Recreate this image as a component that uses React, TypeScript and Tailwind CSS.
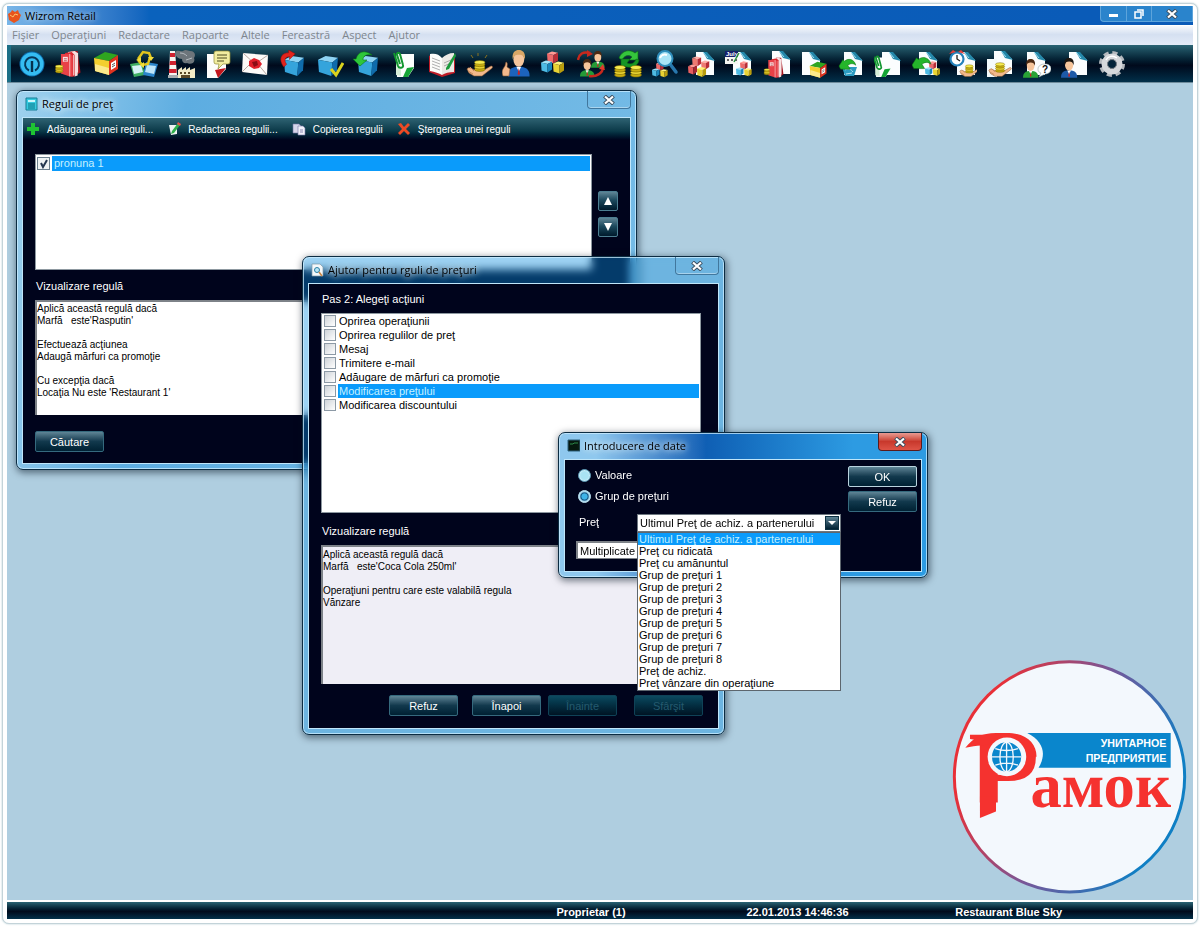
import type { ReactNode } from "react";
import { clsx } from "clsx";

// ---------- toolbar artwork, everything on a 28x28 grid ----------

type Part = { x?: number; y?: number; s?: number };

const at = ({ x = 0, y = 0, s = 1 }: Part) => `translate(${x} ${y}) scale(${s})`;

const Cube = ({ top, left, right, ...p }: Part & { top: string; left: string; right: string }) => (
  <g transform={at(p)}>
    <path d="M0 2.500 5 .5l6 1.200L6.500 4z" fill={top} />
    <path d="M0 2.500 6.500 4v8.500L.5 10.500z" fill={left} />
    <path d="M6.500 4 11 1.700v7.800l-4.500 3z" fill={right} />
  </g>
);

const Cubes = (p: Part) => (
  <g transform={at(p)}>
    <Cube x={6} y={0} top="#ff9a94" left="#ee6a6a" right="#b92d36" />
    <Cube x={0} y={9} top="#9fe2f7" left="#4ebbe4" right="#1a86bb" />
    <Cube x={12} y={10} top="#fff27a" left="#e9d334" right="#b99d0d" />
  </g>
);

// report icons stack red and yellow cubes tighter
const RedCubes = (p: Part) => (
  <g transform={at(p)}>
    <Cube x={5} y={0} top="#ffb0a8" left="#ee7a72" right="#b92d36" />
    <Cube x={0} y={10} top="#ff9a94" left="#e85f60" right="#a92630" />
    <Cube x={16} y={5} s={0.9} top="#ffb0a8" left="#ee7a72" right="#b92d36" />
    <Cube x={11} y={13} top="#fff27a" left="#e9d334" right="#b99d0d" />
  </g>
);

const BlueBox = (p: Part) => (
  <g transform={at(p)}>
    <path d="M0 5 8 1l13 2-6 5z" fill="#8fd3f3" />
    <path d="M0 5l15 3-1 14L1 18z" fill="#35a4dc" />
    <path d="M15 8l6-5-1 13-6 6z" fill="#0f6bab" />
  </g>
);

const Binder = (p: Part) => (
  <g transform={at(p)}>
    <path d="M1 7 12 1l13 3-9 6z" fill="#2fa51f" />
    <path d="M1 7l15 3v14L2 20z" fill="#f3cf2f" />
    <path d="M2 13l14 4v7L2 20z" fill="#fbe98b" />
    <path d="M16 10l9-6v14l-9 6z" fill="#df3320" />
    <path d="M18 12l5-3v7l-5 3z" fill="#fff" />
    <path d="M19 14l3-2m-3 4 3-2" stroke="#555" />
  </g>
);

const Coins = (p: Part) => (
  <g transform={at(p)} stroke="#7b6a00" strokeWidth=".6">
    <ellipse cx="6" cy="10" rx="5.500" ry="2" fill="#c9ae10" />
    <ellipse cx="6" cy="7.500" rx="5.500" ry="2" fill="#e7d232" />
    <ellipse cx="6" cy="5" rx="5.500" ry="2" fill="#c9ae10" />
    <ellipse cx="6" cy="2.500" rx="5.500" ry="2" fill="#f6ea4f" />
  </g>
);

const Book = (p: Part) => (
  <g transform={at(p)}>
    <path d="M13 1h7l3 22-5 3z" fill="#a3131d" />
    <path d="M10 2l7-1 3 2v23l-3 1z" fill="#f6dede" />
    <path d="M7 3l7-1 3 3v22h-4z" fill="#d9272f" />
    <path d="M3 4h9l3 2v21l-3 0-9-3z" fill="#e84148" />
    <path d="M12 4v23" stroke="#fbd5d5" strokeWidth=".8" />
    <path d="M5 7h5v5H5z" fill="#fbe3e3" />
    <path d="M6 9h3M6 11h3" stroke="#a3131d" strokeWidth=".7" />
    <path d="M16 5v21M20 3v20" stroke="#fff" strokeWidth=".8" />
    <Coins x={-3} y={15} s={0.7} />
  </g>
);

const Sheet = (p: Part) => (
  <g transform={at(p)}>
    <path d="M7 2h9l9 8v15H7z" fill="#fbfdfe" />
    <path d="M14 2h4l8 9-8-2z" fill="#2488aa" />
    <path d="M14 2l5 6" stroke="#9edcf0" />
  </g>
);

const Hand = (p: Part) => (
  <g transform={at(p)}>
    <path d="M1 15c2-3 5 0 8 1l9 0 7-4c2 0 2 2 0 3l-9 7H8L3 19z" fill="#f3b98c" stroke="#8b5b35" strokeWidth=".6" />
    <path d="M4 13l4 4M2 17l5 3" stroke="#c98a5c" />
    <Coins x={8} y={6} s={0.95} />
  </g>
);

const Person = ({ body, hair = "#4b2a14", ...p }: Part & { body: string; hair?: string }) => (
  <g transform={at(p)}>
    <path d="M0 22c0-6 3-8 9-8s9 2 9 8z" fill={body} />
    <path d="M7 14l2 4 2-4z" fill="#fff" />
    <path d="M9 15l1 5-1 1-1-1z" fill="#c22" />
    <ellipse cx="9" cy="8" rx="4.500" ry="6" fill="#f6c59b" />
    <path d="M4 8c-1-6 2-8 5-8s6 2 5 8c-1-3-2-4-5-4S5 5 4 8z" fill={hair} />
  </g>
);

const GreenArrow = (p: Part) => (
  <g transform={at(p)}>
    <path d="M0 10 5 2l2 2c4-4 12-3 14 5-4-3-7-2-10 0l3 5-12 0z" fill="#25b52b" stroke="#0b6a12" strokeWidth=".6" />
  </g>
);

const ClipPage = (p: Part) => (
  <g transform={at(p)}>
    <path d="M5 4h18v14l-6 9H6z" fill="#fdfefd" />
    <path d="M12 27l4-9 7-1-6 10z" fill="#15a436" />
    <path d="M5 6l5 14v6L5 25z" fill="#d7efd9" />
    <path d="M3 3l4 13c1 3 6 2 5-1L9 4c-1-2-4-1-3 1l3 9" fill="none" stroke="#12962f" strokeWidth="2" />
  </g>
);

const RedArrow = (p: Part) => (
  <g transform={at(p)}>
    <path d="M4 18C-2 10 1 3 9 3V0l7 4-6 6V7C5 7 4 11 7 15z" fill="#e2231c" stroke="#8e0d0d" strokeWidth=".5" />
  </g>
);

const tools: { name: string; art: ReactNode }[] = [
  {
    name: "Conectare",
    art: (
      <>
        <circle cx="14" cy="14" r="12.500" fill="#0d6fae" />
        <circle cx="14" cy="14" r="11.500" fill="#35bdf2" />
        <path d="M11 20.500a7 7 0 1 1 6 0" fill="none" stroke="#07385a" strokeWidth="2" />
        <path d="M14 11v11" fill="none" stroke="#05304e" strokeWidth="2.400" />
      </>
    ),
  },
  { name: "Registru", art: <Book x={3} y={0} s={0.98} /> },
  { name: "Marfă", art: <Binder x={1} y={1} /> },
  {
    name: "Reciclare",
    art: (
      <>
        <path d="M0 14l12-2 3 13-11 2z" fill="#3fae62" />
        <path d="M2 16l9-1 2 7-9 2z" fill="#d7f2f5" />
        <path d="M28 14l-12-2-3 13 11 2z" fill="#2b85cb" />
        <path d="M26 16l-9-1-2 7 9 2z" fill="#bfe6fa" />
        <path d="M8 9l5-7 6 1 2 5M20 7l-2 7-6 1M12 15l-4-5" fill="none" stroke="#e2c51c" strokeWidth="2.500" />
        <path d="M18 7l6 0-3 4zM14 12v6l-4-3zM6 10l5-3 0 5z" fill="#f2dd3b" />
      </>
    ),
  },
  {
    name: "Producţie",
    art: (
      <>
        <path d="M3 1h5l2 24H2z" fill="#f8f3f0" />
        <path d="M3 3h5l0 4H3zM3 11h6v4H2.500zM2 19h7.500v4H2z" fill="#d02130" />
        <path d="M1 25h10v3H1z" fill="#a8adb0" />
        <path d="M8 2c3-3 5 0 8-1 3-2 5 0 7 0 5 0 6 4 4 7 2 5-4 7-7 5-3 1-5-1-5-4-4 0-7-3-7-7z" fill="#6d757b" />
        <path d="M13 3c3 0 5 1 7 3m-1 4 6-2" stroke="#b5bbc0" fill="none" />
        <path d="M11 28v-8l4-3v3l4-3v3l4-3v3l5-2v10z" fill="#f3ebc6" />
        <path d="M13 22h2v2h-2zm4 0h2v2h-2zm4 0h2v2h-2zM14 25h9v3h-9z" fill="#5c4a26" />
      </>
    ),
  },
  {
    name: "Mesaje",
    art: (
      <>
        <path d="M3 4h19v15l-8 9H3z" fill="#fdfdfc" />
        <path d="M11 20l11-2-8 10z" fill="#c3161d" />
        <path d="M12 1h12q2 0 2 2v9q0 2-2 2h-5l-5 5 1-5h-3q-2 0-2-2V3q0-2 2-2z" fill="#f1eda0" stroke="#8f8a35" strokeWidth=".7" />
        <path d="M13 5h10M13 8h10M13 11h7" stroke="#4c4a20" />
      </>
    ),
  },
  {
    name: "Poştă",
    art: (
      <>
        <path d="M2 3l25 2-1 20L1 22z" fill="#fdfaf8" />
        <path d="M2 3l12 11L27 5M1 22l10-10M26 25 16 13" fill="none" stroke="#b8a8a2" />
        <path d="M8 11l5-3 5 2 3 4-3 4-5 1-5-3z" fill="#e0202c" />
        <path d="M11 12l5-1 1 4-4 2z" fill="#8b0d16" />
      </>
    ),
  },
  { name: "Ieşire marfă", art: <><BlueBox x={5} y={5} s={0.95} /><RedArrow x={1} y={0} s={0.95} /></> },
  {
    name: "Verificare",
    art: (
      <>
        <BlueBox x={2} y={5} s={0.95} />
        <path d="M15 19l5 6 7-12" fill="none" stroke="#d9d21e" strokeWidth="3" />
      </>
    ),
  },
  {
    name: "Intrare marfă",
    art: (
      <>
        <BlueBox x={5} y={5} s={0.95} />
        <path d="M0 9h3C5 2 11-1 19 5c-6-1-9 1-9 5h4l-7 6z" fill="#2ec73a" stroke="#0a7617" strokeWidth=".6" />
      </>
    ),
  },
  { name: "Document nou", art: <ClipPage x={1} y={0} /> },
  {
    name: "Jurnal",
    art: (
      <>
        <path d="M1 6l2-1 11 4 11-5 2 1v18l-13 4L1 22z" fill="#bf1c27" />
        <path d="M2 4c5-1 9 0 12 4v17c-3-2-7-3-12-4z" fill="#fcfcfa" />
        <path d="M26 3c-5 0-9 2-12 5v17c3-2 7-3 12-3z" fill="#eceae6" />
        <path d="M4 8l8 3m-8 0 8 3m-8 0 8 3m-8 0 8 3M16 13l7-3m-7 6 7-3" stroke="#8d8d8d" strokeWidth=".7" />
        <path d="M27 3 18 18l0 2 3-1L28 6z" fill="#1c9a3c" />
      </>
    ),
  },
  {
    name: "Plăţi",
    art: (
      <>
        <Hand x={1} y={4} />
        <path d="M6 5l2 3M22 5l-2 3M13 3v3" stroke="#8a7220" />
      </>
    ),
  },
  {
    name: "Clienţi",
    art: (
      <>
        <Person x={6} y={0} s={1.2} body="#1c63bd" hair="#d9a766" />
        <path d="M1 26c-2-5 0-7 2-10l1-4c2 0 1 4 1 5l3 2-1 7z" fill="#f3b98c" stroke="#8b5b35" strokeWidth=".6" />
      </>
    ),
  },
  { name: "Articole", art: <Cubes x={2} y={1} /> },
  {
    name: "Schimb personal",
    art: (
      <>
        <Person x={14} y={1} s={0.76} body="#259b37" />
        <Person x={3} y={9} s={0.8} body="#259b37" />
        <path d="M1 10C2 4 6 1 13 3" fill="none" stroke="#c6281d" strokeWidth="2.500" />
        <path d="M10 0l6 4-6 3z" fill="#c6281d" />
        <path d="M26 17c0 6-6 10-14 9" fill="none" stroke="#c6281d" strokeWidth="2.500" />
        <path d="M22 19l4-5 2 6z" fill="#e23b2d" />
      </>
    ),
  },
  {
    name: "Rotaţie bani",
    art: (
      <>
        <path d="M5 8C8 0 16-1 21 3l3-2v9h-9l3-3c-4-3-8-1-10 3z" fill="#35c53c" stroke="#0b6a12" strokeWidth=".6" />
        <path d="M25 10c-1 7-9 9-15 6l-3 3V9h9l-3 4c4 2 8 0 9-4z" fill="#179525" stroke="#0b6a12" strokeWidth=".6" />
        <Coins x={0} y={15} />
        <Coins x={16} y={15} />
      </>
    ),
  },
  {
    name: "Căutare articole",
    art: (
      <>
        <Cubes x={1} y={12} s={0.68} />
        <path d="M19 14l6 8" stroke="#2877ad" strokeWidth="3.500" strokeLinecap="round" />
        <circle cx="14" cy="8.500" r="7.500" fill="#a9e4f6" stroke="#2f8ebc" strokeWidth="2" />
        <path d="M9 8c1-3 4-4 7-3" fill="none" stroke="#fff" strokeWidth="2" />
      </>
    ),
  },
  { name: "Raport articole", art: <><Sheet x={1} /><RedCubes x={0} y={6} s={0.82} /></> },
  {
    name: "Raport lunar",
    art: (
      <>
        <Sheet x={1} />
        <Cubes x={11} y={11} s={0.68} />
        <path d="M0 1h13v13H0z" fill="#f6f6f2" />
        <path d="M0 1h13v6H0z" fill="#16206a" />
        <text x="1" y="6" fontSize="6" fontWeight="700" fill="#fff" fontFamily="Liberation Sans, sans-serif">July</text>
        <path d="M2 9h2v2H2zm4 0h2v2H6zm4 0h2v2h-2z" fill="#666" />
        <path d="M14 3l-5 9" stroke="#2a9444" strokeWidth="1.500" />
      </>
    ),
  },
  { name: "Raport registru", art: <><Sheet x={2} y={-1} /><Book x={3} y={7} s={0.76} /></> },
  { name: "Raport marfă", art: <><Sheet x={-5} /><Binder x={9} y={11} s={0.7} /></> },
  {
    name: "Raport rotaţie",
    art: (
      <>
        <Sheet />
        <path d="M5 17h15l-3 9H8z" fill="#2b9bc2" />
        <path d="M8 20c3-2 6-1 8 2m-7 2 6-1" stroke="#b5e4f2" fill="none" />
        <GreenArrow x={2} y={8} s={0.8} />
      </>
    ),
  },
  { name: "Raport document", art: <><Sheet x={1} /><ClipPage x={-3} y={4} s={0.85} /></> },
  { name: "Raport retur", art: <><Sheet x={0} /><Cubes x={13} y={11} s={0.66} /><GreenArrow x={0} y={6} s={0.9} /></> },
  {
    name: "Raport orar",
    art: (
      <>
        <Sheet x={1} />
        <Hand x={10} y={10} s={0.75} />
        <circle cx="8" cy="9" r="6.500" fill="#fff" stroke="#2582bb" strokeWidth="2.200" />
        <path d="M8 5v4l3 2" fill="none" stroke="#222" strokeWidth="1.300" />
        <path d="M0 4l4-4 3 2zM16 4l-4-4-3 2z" fill="#e2403c" />
      </>
    ),
  },
  {
    name: "Raport plăţi",
    art: (
      <>
        <Sheet x={1} y={-1} />
        <path d="M1 9h10v18H1z" fill="#f4fafc" />
        <Hand x={2} y={7} s={0.88} />
      </>
    ),
  },
  {
    name: "Întrebări",
    art: (
      <>
        <Sheet x={-3} />
        <Person x={0} y={9} s={0.85} body="#29a336" />
        <path d="M22 14c4 0 6 2 6 5s-3 5-6 5l-6 3 2-4c-3-1-3-3-3-4 0-3 3-5 7-5z" fill="#fff" stroke="#9aa" strokeWidth=".6" />
        <text x="19" y="23" fontSize="10" fontWeight="700" fill="#111" fontFamily="Liberation Sans, sans-serif">?</text>
      </>
    ),
  },
  { name: "Raport personal", art: <><Sheet x={1} /><Person x={0} y={8} s={0.9} body="#1d5aa8" hair="#1d1712" /></> },
  {
    name: "Setări",
    art: (
      <>
        <circle cx="14" cy="14" r="11" fill="none" stroke="#b4b8bd" strokeWidth="4" strokeDasharray="5 3.640" />
        <circle cx="14" cy="14" r="7.500" fill="none" stroke="#d6d8db" strokeWidth="6" />
        <path d="M8 10c2-4 7-5 11-2" stroke="#fff" strokeWidth="1.500" fill="none" />
        <circle cx="14" cy="14" r="4.500" fill="#04243a" stroke="#7b8289" />
      </>
    ),
  },
];

// ---------- shared pieces ----------

const glossy =
  "border border-[#4d7f92] bg-linear-to-b from-[#5f8596] via-[#1d4a5e] via-45% to-[#011a2c] rounded-[2px]";

function PushButton({ children, disabled, focused }: { children: ReactNode; disabled?: boolean; focused?: boolean }) {
  return (
    <button
      type="button"
      disabled={disabled}
      className={clsx(
        "h-[21px] w-[69px] shrink-0 rounded-[2px] border text-center leading-4",
        disabled
          ? "border-[#0f4257] bg-linear-to-b from-[#0c4a60] to-[#001424] text-[#245a6e]"
          : "bg-linear-to-b from-[#5f8596] via-[#12394d] via-50% to-[#012133] text-white",
        !disabled && (focused ? "border-[#b9d3de]" : "border-[#356a7e]"),
      )}
    >
      {children}
    </button>
  );
}

function CloseGlyph() {
  return (
    <svg viewBox="0 0 12 10" className="h-[10px] w-3" aria-hidden="true">
      <path d="M1.500 1 10.500 9M10.500 1 1.500 9" stroke="#3c4f60" strokeWidth="4" />
      <path d="M2 1.500 10 8.500M10 1.500 2 8.500" stroke="#fff" strokeWidth="2.200" />
    </svg>
  );
}

type WindowProps = {
  title: string;
  icon: ReactNode;
  place: string;
  glass: string;
  close: string;
  children: ReactNode;
};

function Window({ title, icon, place, glass, close, children }: WindowProps) {
  return (
    <section
      aria-label={title}
      className={clsx(
        "absolute flex flex-col rounded-[7px] border border-[#0c2c42] px-[5px] pb-[5px] shadow-[inset_0_0_0_1px_rgba(205,238,255,0.75),1px_2px_7px_1px_rgba(0,15,30,0.5)]",
        place,
        glass,
      )}
    >
      <header className="flex h-[26px] shrink-0 items-start gap-1 pl-[3px]">
        <span className="mt-1.5 shrink-0">{icon}</span>
        <h2 className="mt-1 flex-1 font-['Open_Sans',sans-serif] text-[11px] leading-[18px] text-black [text-shadow:0_0_6px_#fff,0_0_8px_#d8f0ff]">
          {title}
        </h2>
        <button
          type="button"
          aria-label="Închide"
          className={clsx("flex h-[18px] w-[44px] items-center justify-center rounded-b-[4px] border border-t-0", close)}
        >
          <CloseGlyph />
        </button>
      </header>
      <div className="flex-1 border border-[#bfe6fa] bg-[#00041c] text-white">{children}</div>
    </section>
  );
}

const calmClose = "border-[#41779d] shadow-[inset_0_-1px_0_rgba(255,255,255,0.4)]";

// ---------- rules window ----------

const ruleActions = [
  {
    label: "Adăugarea unei reguli...",
    icon: <path d="M5 1h4v4h4v4H9v4H5V9H1V5h4z" fill="#1fc433" />,
  },
  {
    label: "Redactarea regulii...",
    icon: (
      <>
        <path d="M2 3h8v9l-6 1z" fill="#eef3f3" />
        <path d="M11 1l2 2-6 8-3 1 1-3z" fill="#2eb04a" />
        <path d="M11 0l3 2-1 2-3-2z" fill="#e4504a" />
      </>
    ),
  },
  {
    label: "Copierea regulii",
    icon: (
      <>
        <path d="M1 2h6l2 2v7H1z" fill="#d6d6ea" stroke="#7777a5" strokeWidth=".6" />
        <path d="M6 4h5l2 2v7H6z" fill="#f0f0fa" stroke="#7777a5" strokeWidth=".6" />
        <path d="M8 8h3M8 10h3" stroke="#8888b0" />
      </>
    ),
  },
  {
    label: "Ştergerea unei reguli",
    icon: <path d="M1 2l3-1 3 4 4-4 2 2-4 4 4 4-2 2-4-4-4 4-2-2 4-4z" fill="#ee4a24" />,
  },
];

function RulesWindow() {
  return (
    <Window
      title="Reguli de preţ"
      place="left-[9px] top-[7px] w-[621px]"
      glass="bg-linear-100 from-[#9fd2ee] via-[#5dade1] via-25% to-[#76bce6]"
      close={calmClose}
      icon={
        <svg viewBox="0 0 13 14" className="h-3.5 w-[13px]" aria-hidden="true">
          <path d="M1 1h11v12H1z" fill="#35cbe0" stroke="#147c95" />
          <path d="M3 3h7v2H3z" fill="#c9f6fb" />
          <path d="M3 7h7M3 9h7M3 11h7" stroke="#0d7488" />
        </svg>
      }
    >
      <div className="flex h-[22px] items-center gap-[14px] bg-linear-to-b from-[#2e6373] via-[#0a3948] via-60% to-[#00041c] pl-[3px] text-[10px]">
        {ruleActions.map(({ label, icon }) => (
          <button key={label} type="button" className="flex items-center gap-[7px] whitespace-nowrap">
            <svg viewBox="0 0 14 14" className="size-3.5" aria-hidden="true">{icon}</svg>
            {label}
          </button>
        ))}
      </div>
      <div className="px-3 pb-[11px] pt-[14px]">
        <div className="flex gap-1.5">
          <div className="h-[116px] flex-1 border border-[#8d98a0] bg-white p-px">
            <label className="flex h-[15px] items-center">
              <input type="checkbox" defaultChecked className="peer sr-only" />
              <span className="mr-0.5 flex size-[13px] items-center justify-center border border-[#6b7f8e] bg-[#eef2f4]">
                <svg viewBox="0 0 10 10" className="size-2.5" aria-hidden="true">
                  <path d="M2 4l2 4 4-7" fill="none" stroke="#24364f" strokeWidth="2" />
                </svg>
              </span>
              <span className="flex-1 self-stretch bg-[#0a9bfb] pl-0.5 leading-[15px] text-[#c4f1ff]">pronuna 1</span>
            </label>
          </div>
          <div className="flex flex-col gap-1.5 pt-[37px]">
            <button type="button" aria-label="Mută în sus" className={clsx("flex size-5 items-center justify-center", glossy)}>
              <svg viewBox="0 0 8 8" className="size-2" aria-hidden="true"><path d="M4 0l4 8H0z" fill="#fff" /></svg>
            </button>
            <button type="button" aria-label="Mută în jos" className={clsx("flex size-5 items-center justify-center", glossy)}>
              <svg viewBox="0 0 8 8" className="size-2" aria-hidden="true"><path d="M0 0h8L4 8z" fill="#fff" /></svg>
            </button>
          </div>
        </div>
        <h3 className="mb-1.5 mt-2 pl-px leading-4">Vizualizare regulă</h3>
        <div className="mb-4 mr-[26px] h-[115px] whitespace-pre border-2 border-b-0 border-r-0 border-[#7d8288] bg-white pt-px text-[10px] leading-3 text-black">
          {"Aplică această regulă dacă\nMarfă   este'Rasputin'\n\nEfectuează acţiunea\nAdaugă mărfuri ca promoţie\n\nCu excepţia dacă\nLocaţia Nu este 'Restaurant 1'"}
        </div>
        <PushButton>Căutare</PushButton>
      </div>
    </Window>
  );
}

// ---------- wizard window ----------

const wizardActions = [
  "Oprirea operaţiunii",
  "Oprirea regulilor de preţ",
  "Mesaj",
  "Trimitere e-mail",
  "Adăugare de mărfuri ca promoţie",
  "Modificarea preţului",
  "Modificarea discountului",
];

function WizardWindow() {
  return (
    <Window
      title="Ajutor pentru rguli de preţuri"
      place="left-[295px] top-[173px] w-[423px]"
      glass="bg-[#0a8ee0]/40 backdrop-blur-[4px]"
      close={calmClose}
      icon={
        <svg viewBox="0 0 13 14" className="h-3.5 w-[13px]" aria-hidden="true">
          <path d="M1 1h8l3 3v9H1z" fill="#f4f8fa" stroke="#7d98a8" strokeWidth=".7" />
          <circle cx="6" cy="7" r="2.500" fill="#b9e6f5" stroke="#2a7fa5" />
          <path d="M8 9l3 4" stroke="#c98544" strokeWidth="1.500" />
        </svg>
      }
    >
      <div className="pb-3 pl-3 pr-[17px] pt-[7px]">
        <h3 className="mb-1.5 pl-px leading-4">Pas 2: Alegeţi acţiuni</h3>
        <div className="h-[200px] border border-[#8d98a0] bg-white pb-px pl-0.5 pr-px text-black">
          {wizardActions.map((action) => (
            <label key={action} className="flex h-3.5 items-center gap-0.5">
              <input
                type="checkbox"
                className="size-3 appearance-none border border-[#8c99a5] bg-linear-to-br from-[#cfd4d9] to-white"
              />
              <span
                className={clsx(
                  "flex-1 pl-px leading-3.5",
                  action === "Modificarea preţului" && "bg-[#0a9bfb] text-[#c4f1ff]",
                )}
              >
                {action}
              </span>
            </label>
          ))}
        </div>
        <h3 className="mb-1.5 mt-2.5 pl-px leading-4">Vizualizare regulă</h3>
        <div className="h-[139px] whitespace-pre border-2 border-b-0 border-r-0 border-[#7d8288] bg-[#efeef6] pt-0.5 text-[10px] leading-3 text-black">
          {"Aplică această regulă dacă\nMarfă   este'Coca Cola 250ml'\n\nOperaţiuni pentru care este valabilă regula\nVănzare"}
        </div>
        <div className="-mr-0.5 mt-[11px] flex justify-end gap-[7px]">
          <PushButton>Refuz</PushButton>
          <span />
          <PushButton>Înapoi</PushButton>
          <PushButton disabled>Înainte</PushButton>
          <span className="w-[3px]" />
          <PushButton disabled>Sfârşit</PushButton>
        </div>
      </div>
    </Window>
  );
}

// ---------- data entry dialog ----------

const prices = [
  "Ultimul Preţ de achiz. a partenerului",
  "Preţ cu ridicată",
  "Preţ cu amănuntul",
  "Grup de preţuri 1",
  "Grup de preţuri 2",
  "Grup de preţuri 3",
  "Grup de preţuri 4",
  "Grup de preţuri 5",
  "Grup de preţuri 6",
  "Grup de preţuri 7",
  "Grup de preţuri 8",
  "Preţ de achiz.",
  "Preţ vânzare din operaţiune",
];

const radio =
  "size-[13px] appearance-none rounded-full border border-[#5d9ab5] bg-[#a9e3f3] shadow-[inset_0_0_2px_#fff] checked:border-[#b6dcec] checked:bg-[radial-gradient(#3fb4e8_35%,#0a4f80_45%,#8ccdea_65%)]";

function DataDialog() {
  return (
    <Window
      title="Introducere de date"
      place="left-[551px] top-[349px] w-[370px]"
      glass="bg-linear-to-r from-[#8fc8ee] from-10% via-[#0f5fb4] via-40% to-[#2d9be2] to-80%"
      close="border-[#5b1a1a] bg-linear-to-b from-[#e89a92] via-[#c8382c] via-50% to-[#dd5346]"
      icon={
        <svg viewBox="0 0 13 14" className="h-3.5 w-[13px]" aria-hidden="true">
          <path d="M1 1h12v11H1z" fill="#06190f" stroke="#2b5f78" />
          <path d="M3 5h3l1-1h4" stroke="#2c8a4a" fill="none" />
        </svg>
      }
    >
      <div className="flex gap-[7px] pb-3 pl-[11px] pr-1 pt-1.5">
        <div className="flex-1">
          <label className="flex h-[21px] items-center gap-1 pb-[3px] pl-0.5">
            <input type="radio" name="kind" className={radio} />
            Valoare
          </label>
          <label className="flex h-[21px] items-center gap-1 pb-[3px] pl-0.5">
            <input type="radio" name="kind" defaultChecked className={radio} />
            Grup de preţuri
          </label>
          <div className="mt-1.5 flex h-[18px]">
            <label htmlFor="price" className="w-[61px] pl-[3px] leading-4">Preţ</label>
            <div className="relative flex-1">
              <select
                id="price"
                defaultValue={prices[0]}
                className="h-[18px] w-full appearance-none border border-[#6d7780] bg-white pl-0.5 leading-4 text-black"
              >
                {prices.map((p) => <option key={p}>{p}</option>)}
              </select>
              <span className="pointer-events-none absolute right-0.5 top-0.5 flex size-3.5 items-center justify-center border border-[#0d3042] bg-linear-to-b from-[#5f8596] to-[#012133]">
                <svg viewBox="0 0 8 4" className="h-1 w-2" aria-hidden="true"><path d="M0 0h8L4 4z" fill="#fff" /></svg>
              </span>
              <ul
                role="listbox"
                aria-label="Preţ"
                className="absolute inset-x-0 top-[18px] z-10 border border-[#5d666e] bg-white pb-px text-black"
              >
                {prices.map((p, i) => (
                  <li
                    key={p}
                    role="option"
                    aria-selected={i === 0}
                    className={clsx("whitespace-nowrap pl-px leading-3", i === 0 && "bg-[#0a9bfb] text-[#c4f1ff]")}
                  >
                    {p}
                  </li>
                ))}
              </ul>
            </div>
          </div>
          <input
            type="text"
            aria-label="Multiplicate"
            defaultValue="Multiplicate"
            className="mt-[9px] block h-[18px] w-[120px] border-2 border-b border-r border-[#7d8288] bg-white pl-0.5 text-black"
          />
        </div>
        <div className="flex flex-col gap-1">
          <PushButton focused>OK</PushButton>
          <PushButton>Refuz</PushButton>
        </div>
      </div>
    </Window>
  );
}

// ---------- brand badge ----------

function Badge() {
  return (
    <svg viewBox="36 24 706 714" className="absolute bottom-1 right-[6px] w-[235px]" role="img" aria-label="Рамок">
      <defs>
        <linearGradient id="ring" x1="0" y1=".3" x2="1" y2=".7">
          <stop offset=".1" stopColor="#e83038" />
          <stop offset=".5" stopColor="#74589a" />
          <stop offset=".9" stopColor="#0f7fc4" />
        </linearGradient>
      </defs>
      <circle cx="389" cy="381" r="346" fill="#f3f8fd" stroke="url(#ring)" strokeWidth="9" />
      <path d="M262 249h431v105H296c22-36 20-78-34-105z" fill="#0a86cc" />
      <g fill="#fff" fontFamily="'Liberation Sans', sans-serif" fontWeight="700" fontSize="32" textAnchor="end">
        <text x="680" y="291">УНИТАРНОЕ</text>
        <text x="680" y="335">ПРЕДПРИЯТИЕ</text>
      </g>
      <g fill="#f5322f" fontFamily="'Liberation Serif', serif" fontWeight="700">
        <text x="84" y="484" fontSize="350">Р</text>
        <text x="272" y="472" fontSize="188">амок</text>
      </g>
      <path d="M76 294c22-30 50-45 92-45h30c60 0 92 30 92 72h-40c0-30-20-44-50-44h-40c-20 12-50 8-84 17z" fill="#f5322f" />
      {/* the lower slab serif is cut into a slanted foot */}
      <path d="M84 458h36v32H84zM168 458h52v32h-52z" fill="#f3f8fd" />
      <path d="M120 440h48v45l-48 20z" fill="#f5322f" />
      <circle cx="201" cy="321" r="58" fill="#f3f8fd" />
      <circle cx="200" cy="321" r="44" fill="#0a86cc" />
      <g fill="none" stroke="#f3f8fd" strokeWidth="4">
        <ellipse cx="200" cy="321" rx="20" ry="44" />
        <path d="M200 277v88M156 321h88M166 296q34 12 68 0M166 346q34-12 68 0" />
      </g>
    </svg>
  );
}

// ---------- application shell ----------

const menus = ["Fişier", "Operaţiuni", "Redactare", "Rapoarte", "Altele", "Fereastră", "Aspect", "Ajutor"];

const shellBar = "bg-linear-to-b from-[#2a6474] via-[#000a1c] via-55% to-[#02304a]";

export default function App() {
  return (
    <div className="min-h-screen bg-white px-0.5 pb-1 pt-[3px] font-['Liberation_Sans',sans-serif] text-[11px]">
      <div className="flex min-h-[921px] flex-col rounded-[7px] border border-[#c3d3d9] bg-white px-1 pb-1 pt-0.5 shadow-[0_0_2px_#a9c4cc]">
        <header className="flex h-[19px] items-start justify-between bg-linear-to-r from-[#79b6e8] via-[#0a62bd] via-12% to-[#0a5bb8] to-90% font-['Open_Sans',sans-serif]">
          <h1 className="flex items-center gap-1 leading-[19px] text-black [text-shadow:0_0_6px_#fff]">
            <svg viewBox="0 0 14 14" className="size-3.5" aria-hidden="true">
              <path d="M1 5l3-2 1-2 3 2 3-2 1 3 2 2-2 5-5 3-5-3z" fill="#e8541c" />
              <path d="M3 6l3 2 2-3 3 1" fill="none" stroke="#ffc26b" />
            </svg>
            Wizrom Retail
          </h1>
          <div className="flex h-[16px] rounded-bl-[4px] border border-t-0 border-[#8fc4ea]/50 bg-[#2a84cc]">
            <button type="button" aria-label="Minimizează" className="flex w-[26px] items-center justify-center border-r border-[#8fc4ea]/50">
              <span className="mt-1 h-[3px] w-[9px] bg-white" />
            </button>
            <button type="button" aria-label="Restaurează" className="flex w-[25px] items-center justify-center border-r border-[#8fc4ea]/50">
              <svg viewBox="0 0 10 10" className="size-2.5" aria-hidden="true">
                <path d="M3 1h6v6M1 3h6v6H1z" fill="none" stroke="#fff" strokeWidth="1.500" />
              </svg>
            </button>
            <button type="button" aria-label="Închide" className="flex w-[40px] items-center justify-center">
              <CloseGlyph />
            </button>
          </div>
        </header>

        <nav className="flex h-5 items-center gap-3 border-t border-white bg-linear-to-b from-[#f6f9fd] via-[#d5e0f1] via-45% to-[#e3ebf7] pl-[5px] font-['Open_Sans',sans-serif] text-[#7e868e]">
          {menus.map((m) => <a key={m} href="#">{m}</a>)}
        </nav>

        <div className={clsx("flex h-[37px] items-center border-l-4 border-[#1b6f86] pl-[7px]", shellBar)}>
          <div className="flex w-[1108px] max-w-full justify-between">
            {tools.map(({ name, art }) => (
              <button key={name} type="button" aria-label={name}>
                <svg viewBox="0 0 28 28" className="size-7" aria-hidden="true">{art}</svg>
              </button>
            ))}
          </div>
        </div>

        <main className="relative min-h-[700px] flex-1 overflow-hidden border-t border-[#6f8c9c] bg-[#afcee0]">
          <RulesWindow />
          <WizardWindow />
          <Badge />
          <DataDialog />
        </main>

        <footer
          className={clsx(
            "mt-0.5 grid h-[17px] grid-cols-[550fr_190fr_209fr_238fr] pt-0.5 font-bold leading-4 text-white",
            shellBar,
          )}
        >
          <span />
          <span>Proprietar (1)</span>
          <span>22.01.2013 14:46:36</span>
          <span>Restaurant Blue Sky</span>
        </footer>
      </div>
    </div>
  );
}
